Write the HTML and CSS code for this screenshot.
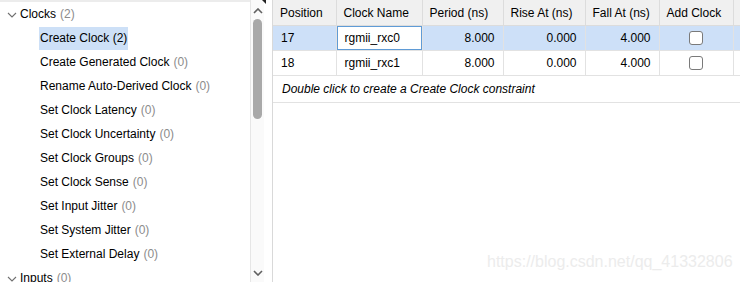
FILE: index.html
```html
<!DOCTYPE html>
<html>
<head>
<meta charset="utf-8">
<link rel="stylesheet" href="styles.css">
</head>
<body>
<div class="app">
  <div class="left">
    <div class="tree">
      <ul class="list">
        <li class="row top"><svg class="chev" width="10" height="6" viewBox="0 0 10 6"><polyline points="1,1 5,5 9,1" fill="none" stroke="#707070" stroke-width="1.1"/></svg><span>Clocks</span> <span class="cnt">(2)</span></li>
        <li class="row child"><span class="sel">Create Clock (2)</span></li>
        <li class="row child">Create Generated Clock <span class="cnt">(0)</span></li>
        <li class="row child">Rename Auto-Derived Clock <span class="cnt">(0)</span></li>
        <li class="row child">Set Clock Latency <span class="cnt">(0)</span></li>
        <li class="row child">Set Clock Uncertainty <span class="cnt">(0)</span></li>
        <li class="row child">Set Clock Groups <span class="cnt">(0)</span></li>
        <li class="row child">Set Clock Sense <span class="cnt">(0)</span></li>
        <li class="row child">Set Input Jitter <span class="cnt">(0)</span></li>
        <li class="row child">Set System Jitter <span class="cnt">(0)</span></li>
        <li class="row child">Set External Delay <span class="cnt">(0)</span></li>
        <li class="row top"><svg class="chev" width="10" height="6" viewBox="0 0 10 6"><polyline points="1,1 5,5 9,1" fill="none" stroke="#707070" stroke-width="1.1"/></svg><span>Inputs</span> <span class="cnt">(0)</span></li>
      </ul>
    </div>
    <div class="scroll">
      <svg class="arrow up" width="10" height="6" viewBox="0 0 10 6"><polyline points="1,5 5,1 9,5" fill="none" stroke="#606060" stroke-width="1.6"/></svg>
      <div class="thumb"></div>
      <div class="track"></div>
      <svg class="arrow" width="10" height="6" viewBox="0 0 10 6"><polyline points="1,1 5,5 9,1" fill="none" stroke="#606060" stroke-width="1.6"/></svg>
    </div>
    <div class="corner"></div>
  </div>
  <div class="right">
    <table class="grid">
      <colgroup>
        <col class="c1"><col class="c2"><col class="c3"><col class="c4"><col class="c5"><col class="c6"><col>
      </colgroup>
      <thead>
        <tr><th>Position</th><th>Clock Name</th><th>Period (ns)</th><th>Rise At (ns)</th><th>Fall At (ns)</th><th>Add Clock</th><th class="extra">S</th></tr>
      </thead>
      <tbody>
        <tr class="selrow"><td>17</td><td class="edit"><div class="editor">rgmii_rxc0</div></td><td class="num">8.000</td><td class="num">0.000</td><td class="num">4.000</td><td class="chk"><span class="box"></span></td><td></td></tr>
        <tr><td>18</td><td>rgmii_rxc1</td><td class="num">8.000</td><td class="num">0.000</td><td class="num">4.000</td><td class="chk"><span class="box"></span></td><td></td></tr>
        <tr class="hint"><td colspan="7">Double click to create a Create Clock constraint</td></tr>
      </tbody>
    </table>
    <div class="watermark">https://blog.csdn.net/qq_41332806</div>
  </div>
</div>
</body>
</html>
```
FILE: styles.css
```css
html, body {
  margin: 0;
  padding: 0;
  background: #fff;
}
body {
  font-family: "Liberation Sans", Arial, sans-serif;
  font-size: 12px;
  color: #000;
  width: 740px;
  height: 282px;
  overflow: hidden;
}
.app {
  display: flex;
  height: 282px;
}
.left {
  position: relative;
  display: flex;
  width: 264px;
  flex: none;
}
.tree {
  width: 250px;
  border-top: 2px solid #ececec;
  overflow: hidden;
}
.list {
  list-style: none;
  margin: 0;
  padding: 0;
}
.row {
  height: 24px;
  line-height: 24px;
  white-space: nowrap;
  display: flex;
  align-items: center;
}
.row.top {
  padding-left: 7px;
}
.chev {
  margin-right: 3px;
  margin-top: 1px;
}
.row.top .cnt {
  margin-left: 4px;
}
.row.child {
  padding-left: 40px;
}
.row.child .cnt {
  margin-left: 4px;
}
.cnt {
  color: #8c8c8c;
}
.sel {
  background: #cde0f7;
  margin-left: -1px;
  padding: 0 1px;
  height: 23px;
  line-height: 23px;
}
.scroll {
  width: 13px;
  border-left: 1px solid #e6e6e6;
  background: #fafafa;
  display: flex;
  flex-direction: column;
  align-items: center;
}
.arrow {
  margin: 7px 0 6px;
  flex: none;
}
.arrow.up {
  margin: 8px 0 5px;
}
.thumb {
  width: 9px;
  height: 100px;
  background: #a9a9a9;
  border-radius: 5px;
  flex: none;
}
.track {
  flex: 1;
}
.corner {
  position: absolute;
  right: -2px;
  top: 0;
  width: 0;
  height: 0;
  border-left: 4px solid transparent;
  border-top: 4px solid #222;
}
.right {
  position: relative;
  flex: 1;
  margin-left: 8px;
  border-left: 1px solid #d9d9d9;
}
.grid {
  border-collapse: collapse;
  table-layout: fixed;
  width: 100%;
}
.c1 { width: 63px; }
.c2 { width: 86px; }
.c3 { width: 81px; }
.c4 { width: 82px; }
.c5 { width: 74px; }
.c6 { width: 74px; }
.grid th {
  background: #f0f0f0;
  font-weight: normal;
  text-align: left;
  height: 25px;
  padding: 0 0 0 7px;
  border-right: 1px solid #dcdcdc;
  border-bottom: 1px solid #dcdcdc;
  white-space: nowrap;
  overflow: hidden;
}
.grid th.extra {
  color: #e8a030;
  border-right: none;
}
.grid td {
  height: 24px;
  padding: 0 0 0 8px;
  border-right: 1px solid #e2e2e2;
  border-bottom: 1px solid #e2e2e2;
  white-space: nowrap;
  overflow: hidden;
}
.grid td:last-child {
  border-right: none;
}
.grid td.num {
  text-align: right;
  padding: 0 8px 0 0;
}
.grid td.chk {
  text-align: center;
  padding: 0;
}
.box {
  display: inline-block;
  width: 12px;
  height: 12px;
  border: 1px solid #7a7a7a;
  border-radius: 3px;
  background: #fff;
  vertical-align: middle;
}
.selrow td {
  background: #cde0f8;
}
.grid td.edit {
  padding: 0;
  background: #fff;
}
.editor {
  height: 22px;
  line-height: 22px;
  border: 1px solid #5f9bd6;
  padding-left: 7px;
}
.hint td {
  height: 26px;
  font-style: italic;
  padding-left: 9px;
}
.watermark {
  position: absolute;
  left: 214px;
  top: 253px;
  font-size: 16px;
  color: #ececec;
  white-space: nowrap;
}
```
